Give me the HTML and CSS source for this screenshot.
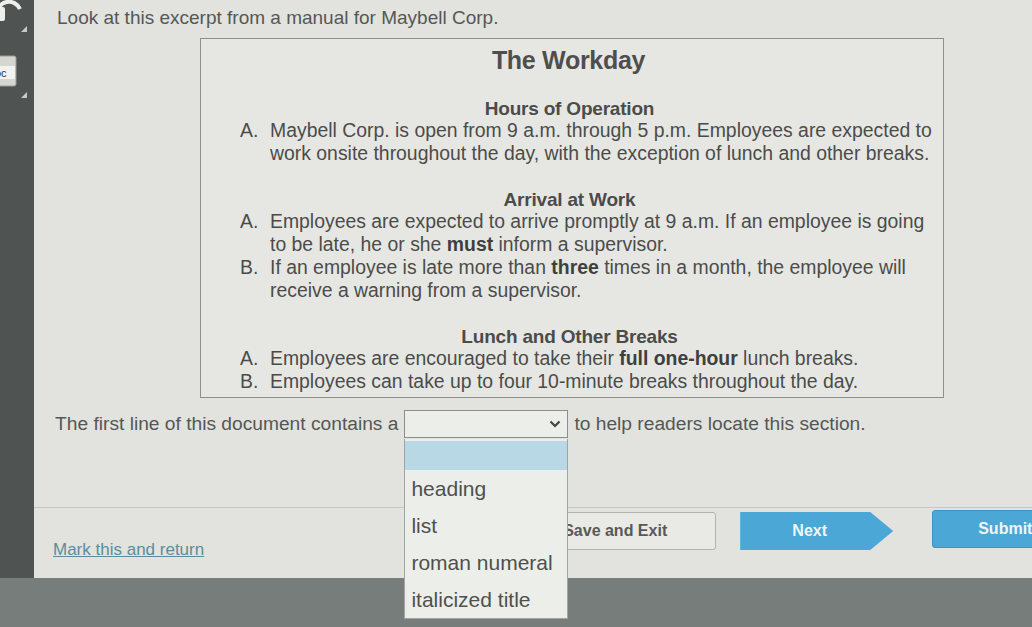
FILE: index.html
```html
<!DOCTYPE html>
<html lang="en">
<head>
<meta charset="utf-8">
<title>Maybell Corp. manual</title>
<link rel="stylesheet" href="styles.css">
</head>
<body>
<div class="app">
  <aside class="sidebar">
    <div class="tool tool-audio">
      <svg width="34" height="46" viewBox="0 0 34 46">
        <path d="M-3 22 A12 12 0 0 1 20 17" fill="none" stroke="#eeeeea" stroke-width="4"/>
        <rect x="-5" y="15" width="10" height="14" rx="2" fill="#eeeeea"/>
        <polygon points="27,40 27,34 21,40" fill="#c9cbc8"/>
      </svg>
    </div>
    <div class="tool tool-doc">
      <svg width="34" height="56" viewBox="0 0 34 56">
        <rect x="-6" y="2" width="22" height="30" rx="2" fill="#d6d6d0" stroke="#9c9c98" stroke-width="1"/>
        <rect x="-6" y="12" width="21" height="13" fill="#f2f2ee"/>
        <text x="-5" y="23" font-family="Liberation Sans, sans-serif" font-size="11" fill="#333">oc</text>
        <polygon points="27,44 27,38 21,44" fill="#c9cbc8"/>
      </svg>
    </div>
  </aside>
  <main class="main">
    <section class="content">
      <p class="prompt">Look at this excerpt from a manual for Maybell Corp.</p>
      <div class="doc">
        <h1 class="doc-title">The Workday</h1>
        <div class="doc-section">
          <h2 class="doc-heading">Hours of Operation</h2>
          <div class="item"><span class="mark">A.</span><span>Maybell Corp. is open from 9 a.m. through 5 p.m. Employees are expected to<br>work onsite throughout the day, with the exception of lunch and other breaks.</span></div>
        </div>
        <div class="doc-section">
          <h2 class="doc-heading">Arrival at Work</h2>
          <div class="item"><span class="mark">A.</span><span>Employees are expected to arrive promptly at 9 a.m. If an employee is going<br>to be late, he or she <b>must</b> inform a supervisor.</span></div>
          <div class="item"><span class="mark">B.</span><span>If an employee is late more than <b>three</b> times in a month, the employee will<br>receive a warning from a supervisor.</span></div>
        </div>
        <div class="doc-section">
          <h2 class="doc-heading">Lunch and Other Breaks</h2>
          <div class="item"><span class="mark">A.</span><span>Employees are encouraged to take their <b>full one-hour</b> lunch breaks.</span></div>
          <div class="item"><span class="mark">B.</span><span>Employees can take up to four 10-minute breaks throughout the day.</span></div>
        </div>
      </div>
      <div class="question">
        <span>The first line of this document contains a</span>
        <span class="select-wrap">
          <span class="select">
            <svg class="chev" width="12" height="8" viewBox="0 0 12 8"><path d="M1.5 1.5 L6 6 L10.5 1.5" fill="none" stroke="#444" stroke-width="2.2"/></svg>
          </span>
          <ul class="options">
            <li class="opt opt-blank"></li>
            <li class="opt">heading</li>
            <li class="opt">list</li>
            <li class="opt">roman numeral</li>
            <li class="opt">italicized title</li>
          </ul>
        </span>
        <span>to help readers locate this section.</span>
      </div>
    </section>
    <footer class="footer">
      <a class="mark-link" href="#">Mark this and return</a>
      <button class="btn btn-save">Save and Exit</button>
      <button class="btn btn-next">Next</button>
      <button class="btn btn-submit">Submit</button>
    </footer>
  </main>
</div>
</body>
</html>
```

FILE: styles.css
```css
* { box-sizing: border-box; }
html, body {
  margin: 0;
  padding: 0;
  width: 1032px;
  height: 627px;
  overflow: hidden;
  background: #767d7b;
  font-family: "Liberation Sans", Arial, sans-serif;
}
.app {
  display: flex;
  height: 578px;
}
.sidebar {
  width: 34px;
  flex-shrink: 0;
  background: #4f5452;
  display: flex;
  flex-direction: column;
  overflow: hidden;
}
.tool { display: block; }
.tool-audio { height: 46px; margin-top: -8px; }
.tool-doc { height: 56px; margin-top: 16px; }
.main {
  flex: 1;
  background: #e2e3de;
  display: flex;
  flex-direction: column;
  min-width: 0;
}
.content {
  height: 508px;
  flex-shrink: 0;
  border-bottom: 1px solid #c6c7c2;
  padding-top: 8px;
}
.prompt {
  margin: 0 0 0 23px;
  font-size: 19px;
  line-height: 20px;
  color: #555755;
  white-space: nowrap;
}
.doc {
  margin: 10px 0 0 166px;
  width: 744px;
  height: 360px;
  border: 1px solid #8f908d;
  background: #e6e7e3;
  padding: 7px 4px 0 39px;
  color: #4b4c4a;
}
.doc-title {
  margin: 0;
  text-align: center;
  font-size: 25px;
  line-height: 28px;
  font-weight: bold;
  color: #4e4f4d;
  letter-spacing: -0.3px;
  padding-right: 42px;
}
.doc-section { margin-top: 25px; }
.doc-section:first-of-type { margin-top: 25px; }
.doc-heading {
  margin: 0;
  text-align: center;
  font-size: 19px;
  line-height: 20px;
  font-weight: bold;
  color: #4b4c4a;
  letter-spacing: -0.2px;
  padding-right: 40px;
}
.item {
  display: grid;
  grid-template-columns: 30px 1fr;
  font-size: 19.4px;
  line-height: 23px;
  letter-spacing: 0;
  white-space: nowrap;
}
.item b { color: #3f403e; }
.question {
  display: flex;
  align-items: center;
  margin: 12px 0 0 21px;
  font-size: 19.2px;
  color: #555755;
  gap: 6px;
  white-space: nowrap;
}
.select-wrap {
  position: relative;
  display: block;
  width: 164px;
  height: 28px;
  flex-shrink: 0;
}
.select {
  display: flex;
  justify-content: flex-end;
  align-items: center;
  width: 164px;
  height: 28px;
  border: 1px solid #8d8e8b;
  background: #eceeea;
  padding-right: 6px;
}
.options {
  position: absolute;
  left: 0;
  top: 29px;
  width: 164px;
  margin: 0;
  padding: 2px 0 0;
  list-style: none;
  background: #eceeea;
  border: 1px solid #a3a4a1;
  border-top: none;
  z-index: 5;
}
.opt {
  height: 37px;
  line-height: 37px;
  padding-left: 6px;
  font-size: 21px;
  color: #4f504e;
  white-space: nowrap;
}
.opt-blank {
  height: 29px;
  background: #b8d8e6;
}
.footer {
  flex: 1;
  display: flex;
  align-items: flex-start;
  padding-top: 4px;
}
.mark-link {
  flex-shrink: 0;
  margin: 28px 0 0 19px;
  font-size: 17px;
  color: #5c8d9c;
  text-decoration: underline;
  white-space: nowrap;
}
.btn {
  flex-shrink: 0;
  font-family: "Liberation Sans", Arial, sans-serif;
  font-size: 16px;
  font-weight: bold;
  height: 38px;
  border-radius: 3px;
  cursor: pointer;
}
.btn-save {
  margin-left: 310px;
  width: 202px;
  background: #e9eae6;
  border: 1px solid #b3b4b0;
  color: #585957;
}
.btn-next {
  margin-left: 24px;
  width: 153px;
  border: none;
  border-radius: 0;
  background: #4aa7d6;
  color: #eef6fa;
  padding-right: 20px;
  clip-path: polygon(0 0, 85% 0, 100% 50%, 85% 100%, 0 100%);
}
.btn-submit {
  margin-left: 39px;
  width: 150px;
  background: #4aa7d6;
  border: 1px solid #3d93c2;
  color: #eef6fa;
  text-align: left;
  padding-left: 45px;
  margin-top: -2px;
}
```
